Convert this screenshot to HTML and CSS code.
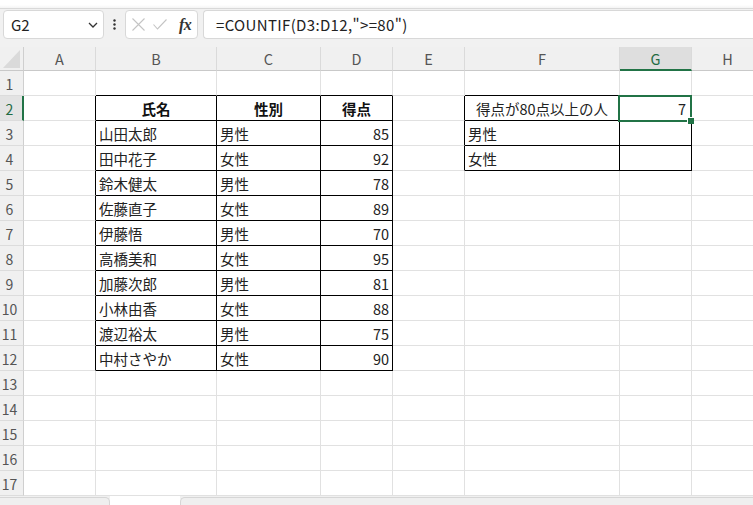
FILE: index.html
```html
<!DOCTYPE html>
<html lang="ja">
<head>
<meta charset="utf-8">
<title>Sheet</title>
<link rel="stylesheet" href="styles.css">
</head>
<body>
<div class="edge"></div>
<div class="fbar">
  <div class="namebox">
    <span>G2</span>
    <svg width="10" height="6" viewBox="0 0 10 6"><path d="M1 1 L5 5 L9 1" fill="none" stroke="#333" stroke-width="1.3"/></svg>
  </div>
  <div class="more">
    <svg width="3" height="11" viewBox="0 0 3 11"><circle cx="1.5" cy="1.5" r="1.2" fill="#333"/><circle cx="1.5" cy="5.5" r="1.2" fill="#333"/><circle cx="1.5" cy="9.5" r="1.2" fill="#333"/></svg>
  </div>
  <div class="fxbox">
    <svg width="13" height="13" viewBox="0 0 13 13"><path d="M0.5 0.5 L12.5 12.5 M12.5 0.5 L0.5 12.5" stroke="#c4c4c4" stroke-width="1.1"/></svg>
    <svg class="chk" width="14" height="11" viewBox="0 0 14 11"><path d="M0.5 5.5 L4.5 10 L13.5 0.5" fill="none" stroke="#c4c4c4" stroke-width="1.1"/></svg>
    <span class="fx">fx</span>
  </div>
  <div class="formula">=COUNTIF(D3:D12,"&gt;=80")</div>
</div>

<div class="sheet">
  <!-- header -->
  <div class="c corner"><div class="tri"></div></div>
  <div class="c h">A</div><div class="c h">B</div><div class="c h">C</div><div class="c h">D</div>
  <div class="c h">E</div><div class="c h">F</div><div class="c h hsel">G</div><div class="c h">H</div>

  <!-- row 1 -->
  <div class="c rh">1</div><div class="c"></div>
  <div class="c bt"></div><div class="c bt"></div><div class="c bt"></div>
  <div class="c"></div><div class="c bt"></div><div class="c bt"></div><div class="c"></div>

  <!-- row 2 -->
  <div class="c rh rsel">2</div><div class="c bl"></div>
  <div class="c tb ctr b">氏名</div><div class="c tb ctr b">性別</div><div class="c tb ctr b">得点</div>
  <div class="c bl"></div><div class="c tb ctr">得点が80点以上の人</div>
  <div class="c tb r sel">7<div class="selbox"><div class="handle"></div></div></div><div class="c"></div>

  <!-- row 3 -->
  <div class="c rh">3</div><div class="c bl"></div>
  <div class="c tb">山田太郎</div><div class="c tb">男性</div><div class="c tb r">85</div>
  <div class="c bl"></div><div class="c tb">男性</div><div class="c tb"></div><div class="c"></div>

  <!-- row 4 -->
  <div class="c rh">4</div><div class="c bl"></div>
  <div class="c tb">田中花子</div><div class="c tb">女性</div><div class="c tb r">92</div>
  <div class="c bl"></div><div class="c tb">女性</div><div class="c tb"></div><div class="c"></div>

  <!-- row 5 -->
  <div class="c rh">5</div><div class="c bl"></div>
  <div class="c tb">鈴木健太</div><div class="c tb">男性</div><div class="c tb r">78</div>
  <div class="c"></div><div class="c"></div><div class="c"></div><div class="c"></div>

  <!-- row 6 -->
  <div class="c rh">6</div><div class="c bl"></div>
  <div class="c tb">佐藤直子</div><div class="c tb">女性</div><div class="c tb r">89</div>
  <div class="c"></div><div class="c"></div><div class="c"></div><div class="c"></div>

  <!-- row 7 -->
  <div class="c rh">7</div><div class="c bl"></div>
  <div class="c tb">伊藤悟</div><div class="c tb">男性</div><div class="c tb r">70</div>
  <div class="c"></div><div class="c"></div><div class="c"></div><div class="c"></div>

  <!-- row 8 -->
  <div class="c rh">8</div><div class="c bl"></div>
  <div class="c tb">高橋美和</div><div class="c tb">女性</div><div class="c tb r">95</div>
  <div class="c"></div><div class="c"></div><div class="c"></div><div class="c"></div>

  <!-- row 9 -->
  <div class="c rh">9</div><div class="c bl"></div>
  <div class="c tb">加藤次郎</div><div class="c tb">男性</div><div class="c tb r">81</div>
  <div class="c"></div><div class="c"></div><div class="c"></div><div class="c"></div>

  <!-- row 10 -->
  <div class="c rh">10</div><div class="c bl"></div>
  <div class="c tb">小林由香</div><div class="c tb">女性</div><div class="c tb r">88</div>
  <div class="c"></div><div class="c"></div><div class="c"></div><div class="c"></div>

  <!-- row 11 -->
  <div class="c rh">11</div><div class="c bl"></div>
  <div class="c tb">渡辺裕太</div><div class="c tb">男性</div><div class="c tb r">75</div>
  <div class="c"></div><div class="c"></div><div class="c"></div><div class="c"></div>

  <!-- row 12 -->
  <div class="c rh">12</div><div class="c bl"></div>
  <div class="c tb">中村さやか</div><div class="c tb">女性</div><div class="c tb r">90</div>
  <div class="c"></div><div class="c"></div><div class="c"></div><div class="c"></div>

  <!-- rows 13-17 -->
  <div class="c rh">13</div><div class="c"></div><div class="c"></div><div class="c"></div><div class="c"></div><div class="c"></div><div class="c"></div><div class="c"></div><div class="c"></div>
  <div class="c rh">14</div><div class="c"></div><div class="c"></div><div class="c"></div><div class="c"></div><div class="c"></div><div class="c"></div><div class="c"></div><div class="c"></div>
  <div class="c rh">15</div><div class="c"></div><div class="c"></div><div class="c"></div><div class="c"></div><div class="c"></div><div class="c"></div><div class="c"></div><div class="c"></div>
  <div class="c rh">16</div><div class="c"></div><div class="c"></div><div class="c"></div><div class="c"></div><div class="c"></div><div class="c"></div><div class="c"></div><div class="c"></div>
  <div class="c rh">17</div><div class="c"></div><div class="c"></div><div class="c"></div><div class="c"></div><div class="c"></div><div class="c"></div><div class="c"></div><div class="c"></div>
</div>

<div class="tabs">
  <div class="tab-left"></div>
  <div class="tab-active"></div>
  <div class="tab-right"></div>
</div>
</body>
</html>
```

FILE: styles.css
```css
html, body {
  margin: 0;
  padding: 0;
}
body {
  width: 753px;
  height: 505px;
  overflow: hidden;
  background: #f1f1f1;
  font-family: "Noto Sans CJK JP", "Noto Sans", sans-serif;
  color: #222;
}

.edge {
  height: 9px;
  box-sizing: border-box;
  background: linear-gradient(#ffffff 0, #ffffff 5px, #f4f4f4 8px);
  border-bottom: 1px solid #d9d9d9;
}

.fbar {
  height: 38px;
  box-sizing: border-box;
  padding: 1px 0 0 3px;
  display: flex;
  align-items: flex-start;
  background: #f1f1f1;
}

.namebox {
  width: 101px;
  height: 29px;
  box-sizing: border-box;
  background: #fff;
  border: 1px solid #d8d8d8;
  border-radius: 4px;
  display: flex;
  align-items: center;
  justify-content: space-between;
  padding: 0 5px 0 7px;
  font-size: 15px;
  color: #222;
}

.more {
  width: 21px;
  height: 29px;
  display: flex;
  align-items: center;
  justify-content: center;
}

.fxbox {
  width: 73px;
  height: 29px;
  box-sizing: border-box;
  background: #fff;
  border: 1px solid #d8d8d8;
  border-radius: 4px;
  display: flex;
  align-items: center;
  padding-left: 6px;
  margin-right: 5px;
}
.fxbox .chk {
  margin-left: 8px;
}
.fx {
  margin-left: 12px;
  font-family: "Liberation Serif", "DejaVu Serif", serif;
  font-style: italic;
  font-weight: bold;
  font-size: 16px;
  color: #333;
  letter-spacing: -0.5px;
}

.formula {
  flex: 1;
  height: 29px;
  box-sizing: border-box;
  background: #fff;
  border: 1px solid #d8d8d8;
  border-right: none;
  border-radius: 4px 0 0 4px;
  display: flex;
  align-items: center;
  padding-left: 12px;
  font-size: 15px;
  letter-spacing: 0.35px;
  color: #222;
}

.sheet {
  display: grid;
  grid-template-columns: 24px 72px 121px 104px 72px 72px 155px 72px 72px;
  grid-template-rows: 24px repeat(17, 25px);
  background: #fff;
  width: 753px;
  overflow: hidden;
}

.c {
  box-sizing: border-box;
  border-right: 1px solid #e1e1e1;
  border-bottom: 1px solid #e1e1e1;
  display: flex;
  align-items: center;
  padding: 1px 3px 0 3px;
  white-space: nowrap;
  font-size: 14.5px;
  color: #222;
  min-width: 0;
}

.h {
  background: #f0f0f0;
  border-right-color: #dadada;
  border-bottom-color: #c9c9c9;
  justify-content: center;
  color: #555;
  font-size: 14.5px;
  padding-top: 0;
}
.hsel {
  background: #dedede;
  border-bottom: 2px solid #217346;
  color: #1f6b43;
}

.corner {
  background: #f0f0f0;
  border-right-color: #cfcfcf;
  border-bottom-color: #c9c9c9;
  align-items: flex-end;
  justify-content: flex-end;
  padding: 0 3px 2px 0;
}
.tri {
  width: 17px;
  height: 18px;
  background: #dadada;
  clip-path: polygon(100% 0, 100% 100%, 0 100%);
}

.rh {
  background: #f0f0f0;
  border-right-color: #cfcfcf;
  border-bottom-color: #dcdcdc;
  justify-content: center;
  padding: 1px 4px 0 0;
  color: #555;
  font-size: 14px;
}
.rsel {
  background: #e3e3e3;
  border-right: 2px solid #217346;
  padding-right: 3px;
  color: #1f6b43;
}

.bl { border-right-color: #000; }
.bt { border-bottom-color: #000; }
.tb {
  border-right-color: #000;
  border-bottom-color: #000;
}
.ctr { justify-content: center; }
.b { font-weight: bold; color: #111; }
.r { justify-content: flex-end; padding-right: 3px; }

.sel {
  position: relative;
  overflow: visible;
  padding-right: 5px;
}
.selbox {
  position: absolute;
  left: -2px;
  top: -1px;
  width: 74px;
  height: 27px;
  box-sizing: border-box;
  border: 2px solid #217346;
  z-index: 2;
}
.handle {
  position: absolute;
  right: -4px;
  bottom: -4px;
  width: 6px;
  height: 6px;
  background: #217346;
  border-left: 1px solid #fff;
  border-top: 1px solid #fff;
}

.tabs {
  height: 9px;
  display: flex;
  background: #f0f0f0;
}
.tab-left {
  width: 110px;
  box-sizing: border-box;
  border-top: 1px solid #d6d6d6;
  border-right: 1px solid #d6d6d6;
  border-top-right-radius: 5px;
  margin-top: 1px;
  background: #efefef;
}
.tab-active {
  width: 70px;
  background: #fff;
}
.tab-right {
  flex: 1;
  box-sizing: border-box;
  border-top: 1px solid #d6d6d6;
  border-left: 1px solid #d6d6d6;
  border-top-left-radius: 5px;
  margin-top: 1px;
  background: #efefef;
}
```
